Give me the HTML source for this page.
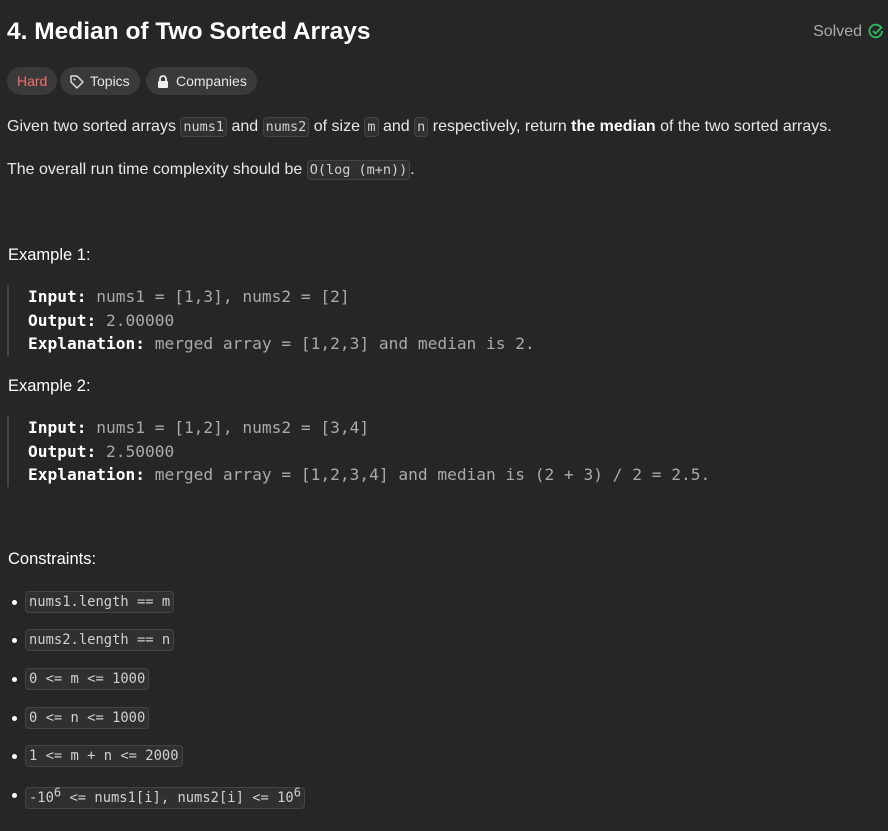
<!DOCTYPE html>
<html><head><meta charset="utf-8"><style>
body{margin:0;width:888px;height:831px;background:#262626;color:#eee;font-family:"Liberation Sans",sans-serif;overflow:hidden;position:relative}
.a{position:absolute;white-space:nowrap}
.t{font-size:24.5px;font-weight:bold;color:#fff;left:7px;top:18px}
.tag{position:absolute;top:67px;height:28px;border-radius:14px;background:#3a3a3a;font-size:14px;line-height:28px;padding:0 10px;color:#e6e6e6}
.p{font-size:16px;color:#e8e8e8;left:7px}
code{font-family:"DejaVu Sans Mono",monospace;font-size:13.5px;background:#303030;border:1px solid #444;border-radius:4px;padding:1px 2px;color:#d0d0d0}
.pre{position:absolute;left:7px;border-left:2px solid #444;padding-left:19px;font-family:"DejaVu Sans Mono",monospace;font-size:16.2px;line-height:23.5px;color:#aaa;white-space:pre}
.pre b{color:#fff}
.h{font-size:16.5px;color:#fff;left:8px}
.li{position:absolute;left:12px;font-size:15px}
.li::before{content:"";position:absolute;left:0;top:50%;width:5px;height:5px;margin-top:-2px;border-radius:50%;background:#fff}
.li code{margin-left:13px;font-size:13.8px;padding:2px 3px}
sup{font-size:12px}
</style></head><body>
<div class="a t">4. Median of Two Sorted Arrays</div>
<div class="a" style="right:26px;top:23px;font-size:16px;color:#aaa">Solved</div>
<svg class="a" style="left:868px;top:23px" width="16" height="16" viewBox="0 0 16 16"><path d="M13.5 5.5A6.3 6.3 0 1 0 14 8" fill="none" stroke="#2cbb5d" stroke-width="1.8"/><path d="M5 8l2.5 2.5L14 4" fill="none" stroke="#2cbb5d" stroke-width="1.8"/></svg>
<div class="tag" style="left:7px;color:#f26c6c">Hard</div>
<div class="tag" style="left:60px;padding-left:30px">Topics</div>
<svg class="a" style="left:69px;top:74px" width="16" height="16" viewBox="0 0 16 16"><path d="M2 2h6l6 6-6 6-6-6z" fill="none" stroke="#ddd" stroke-width="1.5" stroke-linejoin="round"/><circle cx="5.5" cy="5.5" r="1" fill="#ddd"/></svg>
<div class="tag" style="left:146px;padding-left:30px">Companies</div>
<svg class="a" style="left:156px;top:74px" width="14" height="15" viewBox="0 0 14 15"><path d="M4 7V5a3 3 0 0 1 6 0v2" fill="none" stroke="#eee" stroke-width="1.8"/><rect x="2" y="7" width="10" height="7" rx="1" fill="#eee"/></svg>
<div class="a p" style="top:118px">Given two sorted arrays <code>nums1</code> and <code>nums2</code> of size <code>m</code> and <code>n</code> respectively, return <b style="color:#fff">the median</b> of the two sorted arrays.</div>
<div class="a p" style="top:161px">The overall run time complexity should be <code>O(log (m+n))</code>.</div>
<div class="a h" style="top:246px">Example 1:</div>
<div class="pre" style="top:285px"><b>Input:</b> nums1 = [1,3], nums2 = [2]
<b>Output:</b> 2.00000
<b>Explanation:</b> merged array = [1,2,3] and median is 2.</div>
<div class="a h" style="top:377px">Example 2:</div>
<div class="pre" style="top:416px"><b>Input:</b> nums1 = [1,2], nums2 = [3,4]
<b>Output:</b> 2.50000
<b>Explanation:</b> merged array = [1,2,3,4] and median is (2 + 3) / 2 = 2.5.</div>
<div class="a h" style="top:550px">Constraints:</div>
<div class="li" style="top:593px"><code>nums1.length == m</code></div>
<div class="li" style="top:631px"><code>nums2.length == n</code></div>
<div class="li" style="top:670px"><code>0 &lt;= m &lt;= 1000</code></div>
<div class="li" style="top:709px"><code>0 &lt;= n &lt;= 1000</code></div>
<div class="li" style="top:747px"><code>1 &lt;= m + n &lt;= 2000</code></div>
<div class="li" style="top:785px"><code>-10<sup>6</sup> &lt;= nums1[i], nums2[i] &lt;= 10<sup>6</sup></code></div>
</body></html>
